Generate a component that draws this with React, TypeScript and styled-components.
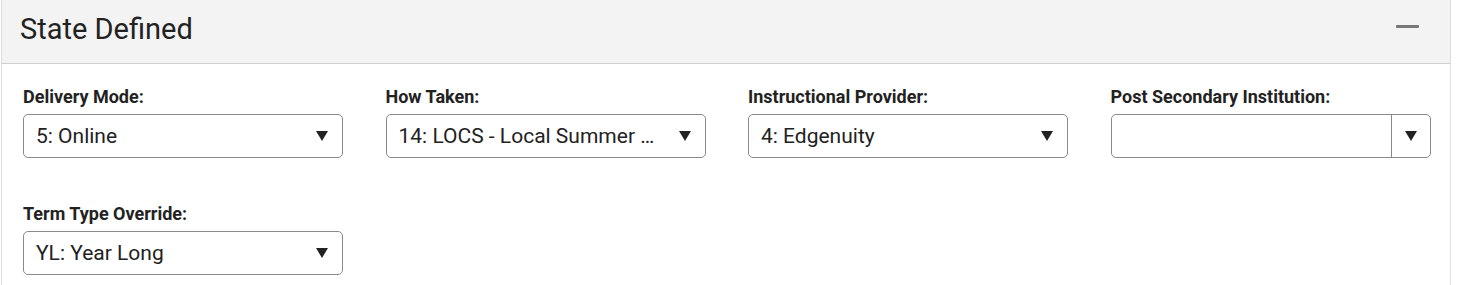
import React from "react";
import styled, { createGlobalStyle } from "styled-components";

const GlobalStyle = createGlobalStyle`
  body {
    margin: 0;
    background: #ffffff;
    font-family: Roboto, "Liberation Sans", sans-serif;
    color: #222;
  }
`;

const Panel = styled.section`
  margin-left: 1px;
  width: 1450px;
  border-left: 1px solid #dedede;
  border-right: 1px solid #dedede;
  box-sizing: border-box;
  height: 285px;
`;

const Header = styled.header`
  height: 64px;
  box-sizing: border-box;
  background: #f3f3f3;
  border-bottom: 1px solid #cfcfcf;
  display: flex;
  align-items: center;
  justify-content: space-between;
  padding: 0 31px 6px 18px;
`;

const Title = styled.h2`
  margin: 0;
  font-size: 29px;
  font-weight: 400;
  color: #222;
`;

const Collapse = styled.span`
  display: block;
  width: 23px;
  height: 3px;
  border-radius: 1px;
  background: #777;
  margin-top: -4px;
`;

const Body = styled.div`
  display: grid;
  grid-template-columns: repeat(4, 320px);
  column-gap: 42.5px;
  row-gap: 45px;
  padding: 22px 0 0 21px;
`;

const Field = styled.div`
  display: flex;
  flex-direction: column;
`;

const Label = styled.label`
  font-size: 18px;
  font-weight: 700;
  color: #222;
  line-height: 22px;
  margin-bottom: 6px;
`;

const Select = styled.div`
  height: 44px;
  box-sizing: border-box;
  border: 1px solid #8a8a8a;
  border-radius: 5px;
  display: flex;
  align-items: center;
  background: #fff;
`;

const Value = styled.span`
  flex: 1;
  min-width: 0;
  padding: 0 10px 0 12px;
  font-size: 21px;
  color: #222;
  white-space: nowrap;
  overflow: hidden;
  text-overflow: ellipsis;
`;

const Arrow = styled.span<{ $split?: boolean }>`
  width: ${(p) => (p.$split ? "38px" : "40px")};
  height: 100%;
  display: flex;
  align-items: center;
  justify-content: center;
  flex-shrink: 0;
  border-left: ${(p) => (p.$split ? "1px solid #8a8a8a" : "none")};

  &::after {
    content: "";
    border-left: 6px solid transparent;
    border-right: 6px solid transparent;
    border-top: 10px solid #222;
  }
`;

const fields = [
  { label: "Delivery Mode:", value: "5: Online" },
  { label: "How Taken:", value: "14: LOCS - Local Summer School" },
  { label: "Instructional Provider:", value: "4: Edgenuity" },
  { label: "Post Secondary Institution:", value: "", split: true },
  { label: "Term Type Override:", value: "YL: Year Long" },
];

function App() {
  return (
    <>
      <GlobalStyle />
      <Panel>
        <Header>
          <Title>State Defined</Title>
          <Collapse />
        </Header>
        <Body>
          {fields.map((f) => (
            <Field key={f.label}>
              <Label>{f.label}</Label>
              <Select>
                <Value>{f.value}</Value>
                <Arrow $split={f.split} />
              </Select>
            </Field>
          ))}
        </Body>
      </Panel>
    </>
  );
}

export default App;
